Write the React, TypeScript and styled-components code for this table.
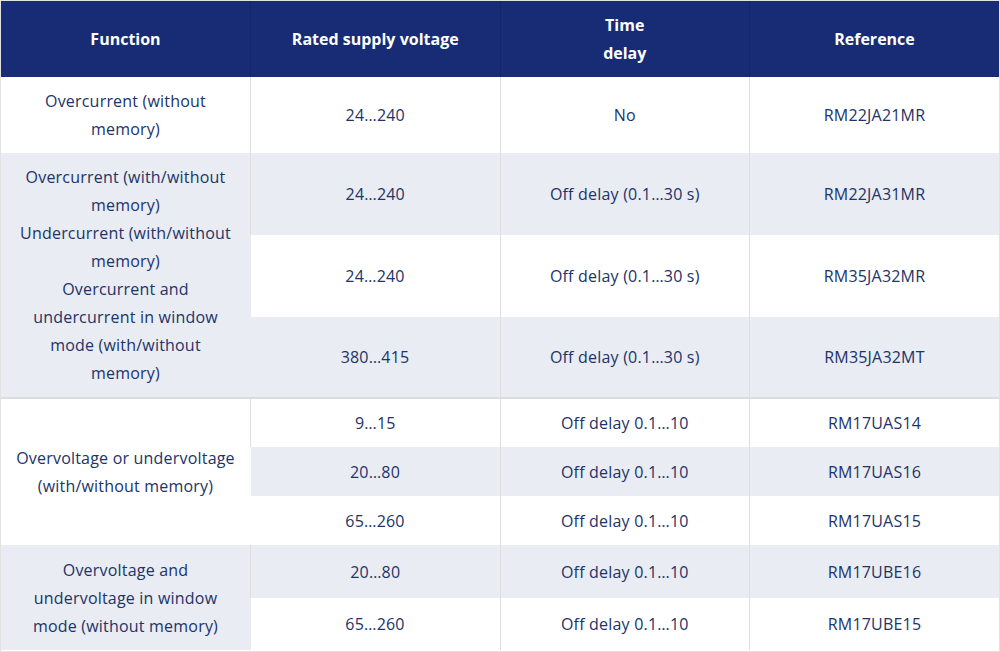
import styled, { createGlobalStyle } from "styled-components";

const GlobalStyle = createGlobalStyle`
  html, body {
    margin: 0;
    padding: 0;
    background: #ffffff;
  }
  body {
    font-family: "Open Sans", "Liberation Sans", sans-serif;
  }
`

const Wrapper = styled.div`
  width: 1000px;
  height: 652px;
  overflow: hidden;
  box-sizing: border-box;
  border: 1px solid #e2e2e2;
`

const Table = styled.table`
  width: 100%;
  border-collapse: collapse;
  table-layout: fixed;
`

const HeadCell = styled.th`
  background-color: #172c74;
  color: #fff;
  font-size: 16px;
  font-weight: 700;
  line-height: 28px;
  height: 76px;
  padding: 10px 8px;
  box-sizing: border-box;
  text-align: center;
  white-space: nowrap;
  border-left: 1px solid #13266a;

  &:first-child {
    border-left: none;
  }
`

const Group = styled.tbody<{ $divider?: boolean }>`
  border-top: ${props => props.$divider ? "2px solid #dcdcdc" : "none"};
`

const Cell = styled.td<{ $shade?: boolean; $height?: number }>`
  background-color: ${props => props.$shade ? "#e9ecf3" : "#ffffff"};
  color: #213368;
  font-size: 16px;
  font-weight: 400;
  letter-spacing: 0.2px;
  line-height: 28px;
  padding: 10px 8px;
  height: ${props => props.$height ? props.$height + "px" : "auto"};
  box-sizing: border-box;
  text-align: center;
  vertical-align: middle;
  white-space: nowrap;
  border-left: 1px solid #dedede;

  &:first-child {
    border-left: none;
  }
`

const Line = styled.div`
  white-space: nowrap;
`

type Row = { voltage: string; delay: string; reference: string; shade: boolean; height: number };
type Block = { fn: string[]; shade: boolean; divider?: boolean; rows: Row[] };

const blocks: Block[] = [
    {
        fn: ["Overcurrent (without", "memory)"],
        shade: false,
        rows: [{ voltage: "24…240", delay: "No", reference: "RM22JA21MR", shade: false, height: 76 }],
    },
    {
        fn: [
            "Overcurrent (with/without",
            "memory)",
            "Undercurrent (with/without",
            "memory)",
            "Overcurrent and",
            "undercurrent in window",
            "mode (with/without",
            "memory)",
        ],
        shade: true,
        rows: [
            { voltage: "24…240", delay: "Off delay (0.1…30 s)", reference: "RM22JA31MR", shade: true, height: 82 },
            { voltage: "24…240", delay: "Off delay (0.1…30 s)", reference: "RM35JA32MR", shade: false, height: 82 },
            { voltage: "380…415", delay: "Off delay (0.1…30 s)", reference: "RM35JA32MT", shade: true, height: 81 },
        ],
    },
    {
        fn: ["Overvoltage or undervoltage", "(with/without memory)"],
        shade: false,
        divider: true,
        rows: [
            { voltage: "9…15", delay: "Off delay 0.1…10", reference: "RM17UAS14", shade: false, height: 49 },
            { voltage: "20…80", delay: "Off delay 0.1…10", reference: "RM17UAS16", shade: true, height: 49 },
            { voltage: "65…260", delay: "Off delay 0.1…10", reference: "RM17UAS15", shade: false, height: 49 },
        ],
    },
    {
        fn: ["Overvoltage and", "undervoltage in window", "mode (without memory)"],
        shade: true,
        rows: [
            { voltage: "20…80", delay: "Off delay 0.1…10", reference: "RM17UBE16", shade: true, height: 53 },
            { voltage: "65…260", delay: "Off delay 0.1…10", reference: "RM17UBE15", shade: false, height: 52 },
        ],
    },
];

const App = () => {
    return <>
        <GlobalStyle/>
        <Wrapper>
            <Table>
                <thead>
                    <tr>
                        <HeadCell>Function</HeadCell>
                        <HeadCell>Rated supply voltage</HeadCell>
                        <HeadCell>Time<br/>delay</HeadCell>
                        <HeadCell>Reference</HeadCell>
                    </tr>
                </thead>
                {blocks.map((block, b) => (
                    <Group key={b} $divider={block.divider}>
                        {block.rows.map((row, i) => (
                            <tr key={row.reference}>
                                {i === 0 && (
                                    <Cell $shade={block.shade} rowSpan={block.rows.length}>
                                        {block.fn.map((line, l) => <Line key={l}>{line}</Line>)}
                                    </Cell>
                                )}
                                <Cell $shade={row.shade} $height={row.height}>{row.voltage}</Cell>
                                <Cell $shade={row.shade} $height={row.height}>{row.delay}</Cell>
                                <Cell $shade={row.shade} $height={row.height}>{row.reference}</Cell>
                            </tr>
                        ))}
                    </Group>
                ))}
            </Table>
        </Wrapper>
    </>
}

export default App;
